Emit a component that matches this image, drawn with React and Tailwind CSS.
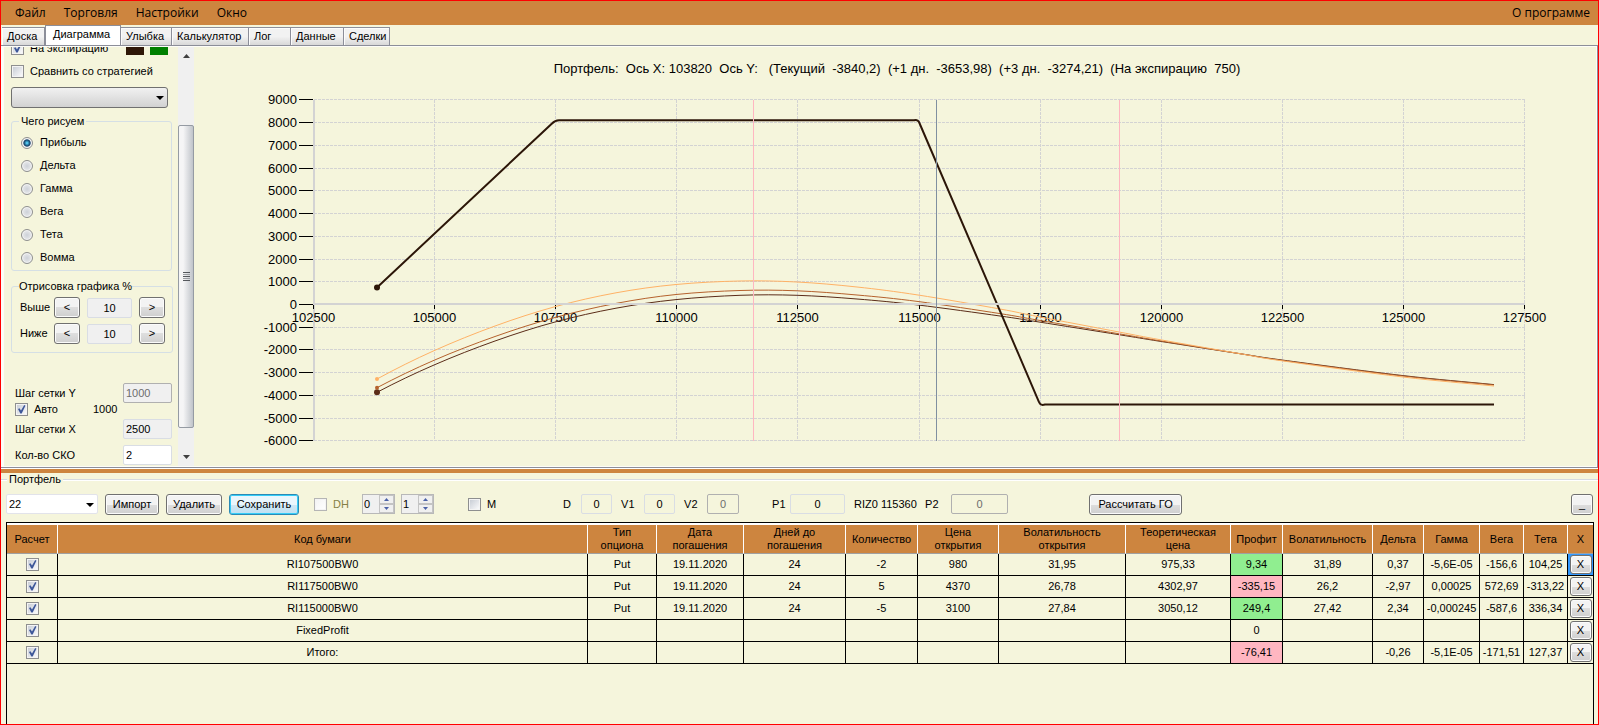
import React, { useState } from 'react';
import clsx from 'clsx';

const menu = ['Файл', 'Торговля', 'Настройки', 'Окно'];

const tabs = [
    { name: 'Доска', width: 'w-[43px]' },
    { name: 'Диаграмма', width: 'w-[76px]' },
    { name: 'Улыбка', width: 'w-[51px]' },
    { name: 'Калькулятор', width: 'w-[77px]' },
    { name: 'Лог', width: 'w-[42px]' },
    { name: 'Данные', width: 'w-[53px]' },
    { name: 'Сделки', width: 'w-[46px]' },
];

const modes = ['Прибыль', 'Дельта', 'Гамма', 'Вега', 'Тета', 'Вомма'];

const columns = [
    { name: 'Расчет', width: 'w-[51px]' },
    { name: 'Код бумаги', width: '' },
    { name: 'Тип опциона', width: 'w-[69px]' },
    { name: 'Дата погашения', width: 'w-[87px]' },
    { name: 'Дней до погашения', width: 'w-[102px]' },
    { name: 'Количество', width: 'w-[72px]' },
    { name: 'Цена открытия', width: 'w-[81px]' },
    { name: 'Волатильность открытия', width: 'w-[127px]' },
    { name: 'Теоретическая цена', width: 'w-[105px]' },
    { name: 'Профит', width: 'w-[52px]' },
    { name: 'Волатильность', width: 'w-[90px]' },
    { name: 'Дельта', width: 'w-[51px]' },
    { name: 'Гамма', width: 'w-[56px]' },
    { name: 'Вега', width: 'w-[44px]' },
    { name: 'Тета', width: 'w-[44px]' },
    { name: 'X', width: 'w-[25px]' },
];

const rows = [
    ['RI107500BW0', 'Put', '19.11.2020', '24', '-2', '980', '31,95', '975,33', '9,34', '31,89', '0,37', '-5,6E-05', '-156,6', '104,25'],
    ['RI117500BW0', 'Put', '19.11.2020', '24', '5', '4370', '26,78', '4302,97', '-335,15', '26,2', '-2,97', '0,00025', '572,69', '-313,22'],
    ['RI115000BW0', 'Put', '19.11.2020', '24', '-5', '3100', '27,84', '3050,12', '249,4', '27,42', '2,34', '-0,000245', '-587,6', '336,34'],
    ['FixedProfit', '', '', '', '', '', '', '', '0', '', '', '', '', ''],
    ['Итого:', '', '', '', '', '', '', '', '-76,41', '', '-0,26', '-5,1E-05', '-171,51', '127,37'],
];

const PROFIT = 8;

const curves = [
    {
        color: '#ffb266',
        dot: 2,
        points: [[377, 379], [434, 350.7], [495, 326], [555, 306.7], [616, 292.8], [676, 284.5], [740, 281], [797, 282], [857, 287], [918, 295], [1000, 309], [1039, 316.8], [1119, 332], [1160, 339.7], [1240, 353.7], [1282, 360.8], [1403, 377], [1494, 386]],
    },
    {
        color: '#b5622d',
        dot: 2,
        points: [[377, 387.7], [434, 360.3], [495, 336.5], [555, 317.5], [616, 303.4], [676, 294.5], [740, 290.5], [797, 290.8], [857, 295], [918, 301.5], [1000, 313.6], [1039, 320.3], [1119, 333.8], [1160, 340.8], [1240, 353.7], [1282, 360.4], [1403, 376], [1494, 385]],
    },
    {
        color: '#5b2c18',
        dot: 3,
        points: [[377, 392.3], [434, 365], [495, 341], [555, 322], [616, 308.2], [676, 299.6], [740, 295.3], [797, 295.3], [857, 299], [918, 305], [1000, 316], [1039, 322], [1119, 334.7], [1160, 341.3], [1240, 353.7], [1282, 360], [1403, 375.6], [1494, 384.6]],
    },
];

const priceX = (price) => Math.round(313 + ((price - 102500) / 2500) * 121.1) + 0.5;
const profitY = (profit) => Math.round(304 - (profit / 1000) * 22.73) + 0.5;

// Catmull-Rom spline as cubic segments, ends are extrapolated
function spline(points) {
    let d = `M${points[0][0]} ${points[0][1]}`;
    for (let i = 0; i < points.length - 1; i++) {
        const b = points[i];
        const c = points[i + 1];
        const a = points[i - 1] || [2 * b[0] - c[0], b[1] - (c[1] - b[1]) * 1.2];
        const e = points[i + 2] || [2 * c[0] - b[0], 2 * c[1] - b[1]];
        d += ` C${b[0] + (c[0] - a[0]) / 6} ${b[1] + (c[1] - a[1]) / 6} ${c[0] - (e[0] - b[0]) / 6} ${c[1] - (e[1] - b[1]) / 6} ${c[0]} ${c[1]}`;
    }
    return d;
}

function Check({ id, label, checked = false, disabled = false }) {
    const [on, setOn] = useState(checked);
    return (
        <span className="relative inline-flex h-[13px] w-[13px] shrink-0">
            <input
                id={id}
                type="checkbox"
                aria-label={label}
                checked={on}
                disabled={disabled}
                onChange={() => setOn(!on)}
                className="h-[13px] w-[13px] appearance-none border border-[#8e8f8f] bg-linear-to-br from-[#c4c9d2] to-white shadow-[inset_0_0_0_1px_#f4f4f4] disabled:border-[#b5b5b5] disabled:from-[#f3f3f3]"
            />
            {on && (
                <svg viewBox="0 0 13 13" className="pointer-events-none absolute inset-0 h-[13px] w-[13px]">
                    <path d="M3 6l1.5-.8L6 7.4 9.2 2l1.2.7L6.7 10.4H5.3z" fill="#3d5799" />
                </svg>
            )}
        </span>
    );
}

function Button({ className, primary = false, children, ...props }) {
    return (
        <button
            type="button"
            className={clsx(
                'rounded-[3px] border text-center',
                primary
                    ? 'border-[#2c8ab5] bg-linear-to-b from-[#eaf6fd] from-50% via-[#d0e8f5] via-50% to-[#bfe0f2] shadow-[inset_0_0_0_1px_#35cdf8]'
                    : 'border-[#707070] bg-linear-to-b from-[#f3f3f3] from-50% via-[#dedede] via-50% to-[#cfcfcf] shadow-[inset_0_0_0_1px_#fbfbfb]',
                className
            )}
            {...props}
        >
            {children}
        </button>
    );
}

function Field({ className, ...props }) {
    return (
        <input
            type="text"
            className={clsx('rounded-xs border border-[#d9dde4] disabled:border-[#b0b0b0] disabled:text-[#6d6d6d]', className)}
            {...props}
        />
    );
}

function Spinner({ label, value }) {
    return (
        <span className="flex h-5 w-[33px] border border-[#b8b8b8] bg-[#f0f0f0]">
            <input type="text" aria-label={label} defaultValue={value} className="w-4 min-w-0 pl-px" />
            <span className="flex flex-1 flex-col">
                <button type="button" aria-label={label + ' +'} className="flex flex-1 items-center justify-center border border-[#c4c4c4]">
                    <svg width="5" height="3" viewBox="0 0 5 3"><path d="M0 3L2.5 0 5 3z" fill="#4b62a8" /></svg>
                </button>
                <button type="button" aria-label={label + ' -'} className="flex flex-1 items-center justify-center border border-[#c4c4c4]">
                    <svg width="5" height="3" viewBox="0 0 5 3"><path d="M0 0L2.5 3 5 0z" fill="#4b62a8" /></svg>
                </button>
            </span>
        </span>
    );
}

function Arrow({ className }) {
    return (
        <svg width="8" height="4" viewBox="0 0 8 4" className={clsx('pointer-events-none absolute', className)}>
            <path d="M0 0h8L4 4z" fill="#000" />
        </svg>
    );
}

function Range({ label, id }) {
    return (
        <div className="flex h-[21px] items-center">
            <label htmlFor={id} className="w-[34px]">{label}</label>
            <Button className="h-[21px] w-[26px]">&lt;</Button>
            <Field id={id} defaultValue="10" className="ml-[7px] h-5 w-[45px] bg-[#f0f0f0] text-center" />
            <Button className="ml-[7px] h-[21px] w-[26px]">&gt;</Button>
        </div>
    );
}

function Sidebar() {
    const [mode, setMode] = useState('Прибыль');

    return (
        <aside className="w-[174px] shrink-0 overflow-hidden pr-1.5 pl-[7px]">
            {/* panel is scrolled, its first row is half hidden */}
            <div className="-mt-[5px] flex h-[13px] items-center">
                <Check id="expiry" checked />
                <label htmlFor="expiry" className="ml-1.5 w-24">На экспирацию</label>
                <span className="h-[13px] w-[18px] bg-[#2e1708]" />
                <span className="ml-1.5 h-[13px] w-[18px] bg-[#008000]" />
            </div>
            <div className="mt-2.5 flex h-[13px] items-center">
                <Check id="compare" />
                <label htmlFor="compare" className="ml-1.5">Сравнить со стратегией</label>
            </div>
            <div className="relative mt-[9px] flex w-[157px]">
                <select aria-label="Стратегия" className="h-[21px] w-full appearance-none rounded-[3px] border border-[#707070] bg-linear-to-b from-[#f1f1f1] to-[#d2d2d2]" />
                <Arrow className="top-[9px] right-1" />
            </div>

            <fieldset className="mt-[7px] rounded-[3px] border border-[#d5dfe5] px-[7px] pt-2 pb-1.5">
                <legend className="px-0.5">Чего рисуем</legend>
                <div className="flex flex-col gap-2.5 pl-0.5">
                    {modes.map((name) => (
                        <label key={name} className="flex h-[13px] items-center gap-[7px]">
                            <input
                                type="radio"
                                name="mode"
                                checked={mode === name}
                                onChange={() => setMode(name)}
                                className="h-3 w-3 appearance-none rounded-full border border-[#8e8f8f] bg-radial from-[#cdd1d8] to-[#f4f4f4] shadow-[inset_0_0_0_1px_#f4f4f4] checked:from-[#4fc3ea] checked:from-10% checked:via-[#123f66] checked:via-45% checked:to-[#f4f4f4] checked:to-60%"
                            />
                            {name}
                        </label>
                    ))}
                </div>
            </fieldset>

            <fieldset className="mt-[9px] rounded-[3px] border border-[#d5dfe5] px-[7px] pt-1 pb-2">
                <legend>Отрисовка графика %</legend>
                <div className="flex flex-col gap-[5px] pl-px">
                    <Range id="above" label="Выше" />
                    <Range id="below" label="Ниже" />
                </div>
            </fieldset>

            <div className="mt-[30px] pl-1">
                <div className="flex h-5 items-center justify-between">
                    <label htmlFor="stepY">Шаг сетки Y</label>
                    <Field id="stepY" disabled defaultValue="1000" className="h-5 w-[49px] bg-[#f0f0f0] pl-0.5" />
                </div>
                <div className="flex h-[13px] items-center">
                    <Check id="auto" checked />
                    <label htmlFor="auto" className="ml-1.5 w-[59px]">Авто</label>
                    <span>1000</span>
                </div>
                <div className="mt-[3px] flex h-5 items-center justify-between">
                    <label htmlFor="stepX">Шаг сетки X</label>
                    <Field id="stepX" defaultValue="2500" className="h-5 w-[49px] bg-[#f0f0f0] pl-0.5" />
                </div>
                <div className="mt-1.5 flex h-5 items-center justify-between">
                    <label htmlFor="sko">Кол-во СКО</label>
                    <Field id="sko" defaultValue="2" className="h-5 w-[49px] bg-white pl-0.5" />
                </div>
            </div>
        </aside>
    );
}

function Scrollbar() {
    return (
        <div className="flex w-4 shrink-0 flex-col bg-[#f0f0f0]">
            <button type="button" aria-label="Вверх" className="flex h-[18px] items-center justify-center">
                <svg width="7" height="4" viewBox="0 0 7 4"><path d="M0 4L3.5 0 7 4z" fill="#404040" /></svg>
            </button>
            <div className="h-[60px]" />
            <div className="flex flex-1 flex-col items-center justify-center gap-px rounded-[2px] border border-[#959ba3] bg-linear-to-r from-[#f5f5f6] from-30% to-[#c0c4ca]">
                <span className="h-px w-[7px] bg-[#55585d]" />
                <span className="h-px w-[7px] bg-[#9a9da2]" />
                <span className="h-px w-[7px] bg-[#55585d]" />
                <span className="h-px w-[7px] bg-[#9a9da2]" />
                <span className="h-px w-[7px] bg-[#55585d]" />
            </div>
            <div className="h-5" />
            <button type="button" aria-label="Вниз" className="flex h-[18px] items-center justify-center">
                <svg width="7" height="4" viewBox="0 0 7 4"><path d="M0 0h7L3.5 4z" fill="#404040" /></svg>
            </button>
        </div>
    );
}

function Chart() {
    const prices = Array.from({ length: 11 }, (_, i) => 102500 + i * 2500);
    const profits = Array.from({ length: 16 }, (_, i) => 9000 - i * 1000);

    return (
        <svg viewBox="194 47 1402 419" className="h-auto w-full font-['Liberation_Sans',sans-serif]" role="img" aria-label="Диаграмма">
            <text x="897" y="73" textAnchor="middle" fontSize="13" className="whitespace-pre">
                {'Портфель:  Ось X: 103820  Ось Y:   (Текущий  -3840,2)  (+1 дн.  -3653,98)  (+3 дн.  -3274,21)  (На экспирацию  750)'}
            </text>

            <g shapeRendering="crispEdges" stroke="#d3d3d3">
                {profits.filter((v) => v !== 0).map((v) => (
                    <line key={v} x1="314" x2="1525" y1={profitY(v)} y2={profitY(v)} strokeDasharray="3 1" />
                ))}
                {prices.slice(1).map((v) => (
                    <line key={v} x1={priceX(v)} x2={priceX(v)} y1="100" y2="441" strokeDasharray="3 1" />
                ))}
                <line x1="314" x2="314" y1="100" y2="441" strokeWidth="2" />
            </g>

            <g shapeRendering="crispEdges" stroke="#000">
                {profits.map((v) => (
                    <line key={v} x1="299" x2="313" y1={profitY(v)} y2={profitY(v)} />
                ))}
                {prices.map((v) => (
                    <line key={v} x1={priceX(v)} x2={priceX(v)} y1="305" y2="309" />
                ))}
            </g>

            <g fontSize="13">
                {profits.map((v) => (
                    <text key={v} x="297" y={profitY(v) + 4} textAnchor="end">{v}</text>
                ))}
                {prices.map((v) => (
                    <text key={v} x={priceX(v)} y="322" textAnchor="middle">{v}</text>
                ))}
            </g>

            {[...curves].reverse().map((curve) => (
                <g key={curve.color}>
                    <path d={spline(curve.points)} fill="none" stroke={curve.color} />
                    <circle cx={curve.points[0][0]} cy={curve.points[0][1]} r={curve.dot} fill={curve.color} />
                </g>
            ))}
            <path
                d="M377 287.5L552 123.5Q555 120.3 559 120.3H914Q917.5 119 919 122L1039 402Q1040.5 406 1045 404.5H1494"
                fill="none"
                stroke="#2c1608"
                strokeWidth="2"
            />
            <circle cx="377" cy="287.5" r="3" fill="#2c1608" />

            <g shapeRendering="crispEdges">
                <line x1="314" x2="1525" y1="304" y2="304" stroke="#d3d3d3" strokeWidth="2" />
                <line x1="753.5" x2="753.5" y1="100" y2="441" stroke="#ffb6c1" />
                <line x1="1119.5" x2="1119.5" y1="100" y2="441" stroke="#ffb6c1" />
                <line x1="936.5" x2="936.5" y1="100" y2="441" stroke="#8090a0" />
            </g>
        </svg>
    );
}

function Toolbar() {
    return (
        <div className="flex h-[22px] items-center pl-[5px] whitespace-nowrap">
            <div className="relative flex w-[92px]">
                <select aria-label="Портфель" className="h-5 w-full appearance-none rounded-xs border border-[#e2e3ea] bg-white pl-0.5">
                    <option>22</option>
                </select>
                <Arrow className="top-[9px] right-1" />
            </div>
            <Button className="ml-[7px] h-[21px] w-[54px]">Импорт</Button>
            <Button className="ml-[7px] h-[21px] w-[56px]">Удалить</Button>
            <Button primary className="ml-[7px] h-[21px] w-[70px]">Сохранить</Button>
            <span className="ml-[15px] flex items-center gap-1.5 text-[#858045]">
                <Check id="dh" disabled />
                <label htmlFor="dh">DH</label>
            </span>
            <span className="ml-[13px] flex gap-1.5">
                <Spinner label="DH от" value="0" />
                <Spinner label="DH до" value="1" />
            </span>
            <span className="ml-[34px] flex items-center gap-1.5">
                <Check id="m" />
                <label htmlFor="m">M</label>
            </span>
            <label htmlFor="d" className="ml-[67px] w-[18px]">D</label>
            <Field id="d" defaultValue="0" className="h-5 w-[31px] text-center" />
            <label htmlFor="v1" className="ml-[9px] w-[23px]">V1</label>
            <Field id="v1" defaultValue="0" className="h-5 w-[31px] text-center" />
            <label htmlFor="v2" className="ml-[9px] w-[23px]">V2</label>
            <Field id="v2" disabled defaultValue="0" className="h-5 w-8 text-center" />
            <label htmlFor="p1" className="ml-[33px] w-[18px]">P1</label>
            <Field id="p1" defaultValue="0" className="h-5 w-[55px] text-center" />
            <span className="ml-[9px] w-[71px]">RIZ0 115360</span>
            <label htmlFor="p2" className="w-[26px]">P2</label>
            <Field id="p2" disabled defaultValue="0" className="h-5 w-[57px] text-center" />
            <Button className="ml-[81px] h-[21px] w-[93px]">Рассчитать ГО</Button>
            <Button className="mr-[5px] ml-auto h-[21px] w-[22px]">_</Button>
        </div>
    );
}

function Positions() {
    return (
        <div className="mt-[7px] mr-1 ml-[5px] flex-1 border border-b-0 border-black">
            <table className="w-full table-fixed border-separate border-spacing-0 text-center">
                <thead>
                    <tr className="h-[31px] bg-[#cd853f]">
                        {columns.map((col, i) => (
                            <th
                                key={col.name}
                                className={clsx(col.width, 'border-t-2 border-b border-t-white border-b-[#a0a0a0] p-0 leading-[13px] font-normal', i < columns.length - 1 && 'border-r border-r-white', (i === 2 || i === 3 || i === 4 || i === 6 || i === 7 || i === 8) && 'px-2')}
                            >
                                {col.name}
                            </th>
                        ))}
                    </tr>
                </thead>
                <tbody>
                    {rows.map((row, r) => (
                        <tr key={row[0]} className="h-[22px]">
                            <td className="border-r border-b border-black p-0">
                                <span className="flex justify-center"><Check label={row[0]} checked /></span>
                            </td>
                            {row.map((cell, i) => (
                                <td
                                    key={i}
                                    className={clsx(
                                        'border-r border-b border-black p-0 whitespace-nowrap',
                                        i === PROFIT && cell.startsWith('-') && 'bg-[#ffb6c1]',
                                        i === PROFIT && cell !== '0' && !cell.startsWith('-') && 'bg-[#90ee90]'
                                    )}
                                >
                                    {cell}
                                </td>
                            ))}
                            <td className={clsx('border-b border-black p-0', r === 0 && 'bg-[#3399ff]')}>
                                <Button className="mx-auto block h-[19px] w-[22px]">X</Button>
                            </td>
                        </tr>
                    ))}
                </tbody>
            </table>
        </div>
    );
}

export default function App() {
    const [active, setActive] = useState('Диаграмма');

    return (
        <div className="flex min-h-screen flex-col border border-[#ff0000] bg-[#f5f5dc] font-['Liberation_Sans',Arial,sans-serif] text-[11px] leading-[13px] text-black">
            <nav className="flex h-6 items-center bg-[#cd853f] pr-2 pl-3.5 font-['Open_Sans','Noto_Sans',sans-serif] text-xs">
                <div className="flex gap-[18px]">
                    {menu.map((name) => (
                        <button key={name} type="button">{name}</button>
                    ))}
                </div>
                <button type="button" className="ml-auto">О программе</button>
            </nav>

            <div role="tablist" className="flex h-5 items-end pl-px">
                {tabs.map((tab) => (
                    <button
                        key={tab.name}
                        type="button"
                        role="tab"
                        aria-selected={active === tab.name}
                        onClick={() => setActive(tab.name)}
                        className={clsx(
                            tab.width,
                            'border-t border-r border-[#8c8e99] text-left whitespace-nowrap',
                            active === tab.name
                                ? 'h-5 border-l bg-white pb-0.5 pl-[7px]'
                                : 'h-[18px] bg-linear-to-b from-[#f2f2f2] from-50% to-[#d8d8d8] pl-[5px] shadow-[inset_1px_1px_0_#fcfcfc]'
                        )}
                    >
                        {tab.name}
                    </button>
                ))}
            </div>

            <main className="flex border-t border-r border-b border-[#8c8e99]">
                <div className="flex min-w-0 flex-1 border-y border-r border-l-[3px] border-[#fdfdf8]">
                    <Sidebar />
                    <Scrollbar />
                    <div className="min-w-0 flex-1">
                        <Chart />
                    </div>
                </div>
            </main>
            <div className="h-[5px] border-t border-white bg-[#cd853f]" />

            <section className="flex flex-1 flex-col">
                <div className="flex items-center gap-0.5">
                    <span className="h-0.5 w-1.5 border-t border-[#d5dae0] bg-white" />
                    <h2>Портфель</h2>
                    <span className="h-0.5 flex-1 border-t border-[#d5dae0] bg-white" />
                </div>
                <div className="flex flex-1 flex-col pt-[7px]">
                    <Toolbar />
                    <Positions />
                </div>
            </section>
        </div>
    );
}
